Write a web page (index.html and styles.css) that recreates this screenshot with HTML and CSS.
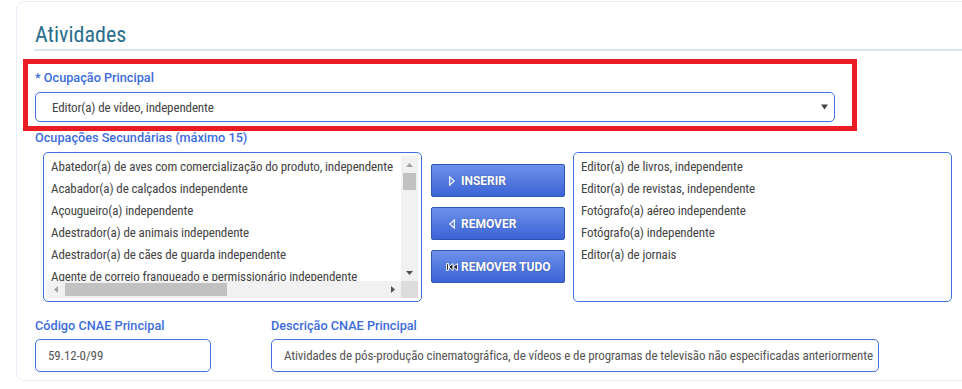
FILE: index.html
```html
<!DOCTYPE html>
<html lang="pt-BR">
<head>
<meta charset="utf-8">
<title>Atividades</title>
<link rel="stylesheet" href="styles.css">
</head>
<body>
<section class="card">
  <h2 class="title">Atividades</h2>

  <div class="group main-group">
    <label class="lbl">* Ocupação Principal</label>
    <div class="select">
      <span class="select-text cond">Editor(a) de vídeo, independente</span>
      <svg class="select-arrow" width="7" height="6" viewBox="0 0 7 6"><polygon points="0,0.5 7,0.5 3.5,5.5" fill="#444"/></svg>
    </div>
    <div class="highlight"></div>
  </div>

  <label class="lbl sec-lbl">Ocupações Secundárias (máximo 15)</label>
  <div class="sec-row">
    <div class="listbox">
      <div class="lb-grid">
        <div class="lb-view cond">
          <div class="opt">Abatedor(a) de aves com comercialização do produto, independente</div>
          <div class="opt">Acabador(a) de calçados independente</div>
          <div class="opt">Açougueiro(a) independente</div>
          <div class="opt">Adestrador(a) de animais independente</div>
          <div class="opt">Adestrador(a) de cães de guarda independente</div>
          <div class="opt">Agente de correio franqueado e permissionário independente</div>
          <div class="opt">Agente de viagens independente</div>
        </div>
        <div class="vscroll">
          <div class="sb-btn"><svg width="7" height="4" viewBox="0 0 7 4"><polygon points="0,4 7,4 3.5,0" fill="#a3a3a3"/></svg></div>
          <div class="vtrack"><div class="vthumb"></div></div>
          <div class="sb-btn"><svg width="7" height="4" viewBox="0 0 7 4"><polygon points="0,0 7,0 3.5,4" fill="#505050"/></svg></div>
        </div>
        <div class="hscroll">
          <div class="sb-btn"><svg width="4" height="7" viewBox="0 0 4 7"><polygon points="4,0 4,7 0,3.5" fill="#a3a3a3"/></svg></div>
          <div class="htrack"><div class="hthumb"></div></div>
          <div class="sb-btn"><svg width="4" height="7" viewBox="0 0 4 7"><polygon points="0,0 0,7 4,3.5" fill="#505050"/></svg></div>
        </div>
        <div class="corner"></div>
      </div>
    </div>

    <div class="btn-col">
      <button class="btn">
        <span class="ico"><svg width="6" height="10" viewBox="0 0 6 10"><polygon points="0.7,0.9 5.2,5 0.7,9.1" fill="none" stroke="#fff" stroke-width="1.2"/></svg></span>
        <span>INSERIR</span>
      </button>
      <button class="btn">
        <span class="ico"><svg width="6" height="10" viewBox="0 0 6 10"><polygon points="5.3,0.9 0.8,5 5.3,9.1" fill="none" stroke="#fff" stroke-width="1.2"/></svg></span>
        <span>REMOVER</span>
      </button>
      <button class="btn">
        <span class="ico"><svg width="12" height="8" viewBox="0 0 12 8"><path d="M0.6 0.6h2v6.8h-2z M2.6 4 L7 0.6 V7.4z M7 4 L11.4 0.6 V7.4z" fill="#1d1d2a" stroke="#fff" stroke-width="1" stroke-linejoin="round"/></svg></span>
        <span>REMOVER TUDO</span>
      </button>
    </div>

    <div class="listbox right-list">
      <div class="lb-view cond">
        <div class="opt">Editor(a) de livros, independente</div>
        <div class="opt">Editor(a) de revistas, independente</div>
        <div class="opt">Fotógrafo(a) aéreo independente</div>
        <div class="opt">Fotógrafo(a) independente</div>
        <div class="opt">Editor(a) de jornais</div>
      </div>
    </div>
  </div>

  <div class="cnae-row">
    <div class="field f-code">
      <label class="lbl">Código CNAE Principal</label>
      <div class="input cond">59.12-0/99</div>
    </div>
    <div class="field f-desc">
      <label class="lbl">Descrição CNAE Principal</label>
      <div class="input cond">Atividades de pós-produção cinematográfica, de vídeos e de programas de televisão não especificadas anteriormente</div>
    </div>
  </div>
</section>
</body>
</html>
```
FILE: styles.css
```css
html, body {
  margin: 0;
  padding: 0;
  background: #fff;
  overflow: hidden;
}
body {
  font-family: Roboto, "Noto Sans", sans-serif;
  color: #444;
}
.cond {
  font-family: "Roboto Condensed", Roboto, sans-serif;
  font-stretch: condensed;
  font-size: 13px;
  letter-spacing: -0.12px;
}
.card {
  margin: 1px -40px 0 16px;
  border: 1px solid #e9eef8;
  border-radius: 8px;
  padding: 20px 0 0 18px;
  height: 380px;
  box-sizing: border-box;
}
.title {
  margin: 0 0 0 -1px;
  padding: 0 0 1px 1px;
  font-family: "Roboto Condensed", Roboto, sans-serif;
  font-stretch: condensed;
  font-weight: 400;
  font-size: 22px;
  line-height: 26px;
  color: #2b6d8d;
  border-bottom: 2px solid #d9e3f5;
}
.lbl {
  display: block;
  font-size: 12.7px;
  font-weight: 500;
  line-height: 16px;
  color: #3b6cdc;
}
.group {
  position: relative;
  margin-top: 19px;
  width: 800px;
}
.main-group .lbl {
  margin-bottom: 6px;
}
.select {
  height: 30px;
  box-sizing: border-box;
  border: 1px solid #3d74e0;
  border-radius: 5px;
  display: flex;
  align-items: center;
  padding: 0 6px 0 16px;
  justify-content: space-between;
}
.select-text {
  color: #444;
}
.select-arrow {
  display: block;
}
.highlight {
  position: absolute;
  left: -12px;
  top: -11px;
  width: 834px;
  height: 72px;
  box-sizing: border-box;
  border: 5px solid #ec1c24;
  pointer-events: none;
}
.sec-lbl {
  margin-top: 8px;
}
.sec-row {
  display: flex;
  align-items: flex-start;
  margin-top: 6px;
  padding-left: 8px;
}
.listbox {
  width: 379px;
  height: 150px;
  box-sizing: border-box;
  border: 1px solid #3d74e0;
  border-radius: 5px;
  padding: 3px;
}
.lb-grid {
  display: grid;
  grid-template-columns: 1fr 17px;
  grid-template-rows: 1fr 17px;
  height: 100%;
}
.lb-view {
  overflow: hidden;
  white-space: nowrap;
  color: #444;
}
.opt {
  padding-left: 4px;
  line-height: 22px;
  height: 22px;
}
.vscroll {
  background: #f1f1f1;
  display: flex;
  flex-direction: column;
}
.sb-btn {
  width: 17px;
  height: 17px;
  flex: none;
  display: flex;
  align-items: center;
  justify-content: center;
}
.sb-btn svg {
  display: block;
}
.vtrack {
  flex: 1;
}
.vthumb {
  margin: 0 2px;
  height: 17px;
  background: #c1c1c1;
}
.hscroll {
  background: #f1f1f1;
  display: flex;
}
.htrack {
  flex: 1;
  padding-top: 2px;
}
.hthumb {
  margin-left: 1px;
  width: 162px;
  height: 13px;
  background: #c1c1c1;
}
.corner {
  background: #dcdcdc;
}
.btn-col {
  display: flex;
  flex-direction: column;
  gap: 10px;
  margin: 12px 8px 0 9px;
}
.btn {
  width: 134px;
  height: 33px;
  box-sizing: border-box;
  border: 1px solid #2f56b4;
  border-radius: 2px;
  background: linear-gradient(#6d91ea, #3b63d5);
  color: #fff;
  font-family: Roboto, sans-serif;
  font-weight: 700;
  font-size: 12px;
  display: flex;
  align-items: center;
  padding: 0 0 0 14px;
  text-shadow: 0 0 1px rgba(20, 30, 80, .5);
  cursor: pointer;
}
.ico {
  width: 12px;
  display: flex;
  justify-content: center;
  align-items: center;
  margin-right: 3px;
}
.ico svg {
  display: block;
}
.right-list .lb-view {
  height: 100%;
}
.cnae-row {
  display: flex;
  gap: 60px;
  margin-top: 16px;
}
.field .lbl {
  margin-bottom: 5px;
}
.f-code {
  width: 176px;
}
.f-desc {
  width: 608px;
}
.input {
  height: 33px;
  box-sizing: border-box;
  border: 1px solid #3d74e0;
  border-radius: 5px;
  padding-left: 12px;
  display: flex;
  align-items: center;
  color: #555;
  white-space: nowrap;
  overflow: hidden;
}
```
